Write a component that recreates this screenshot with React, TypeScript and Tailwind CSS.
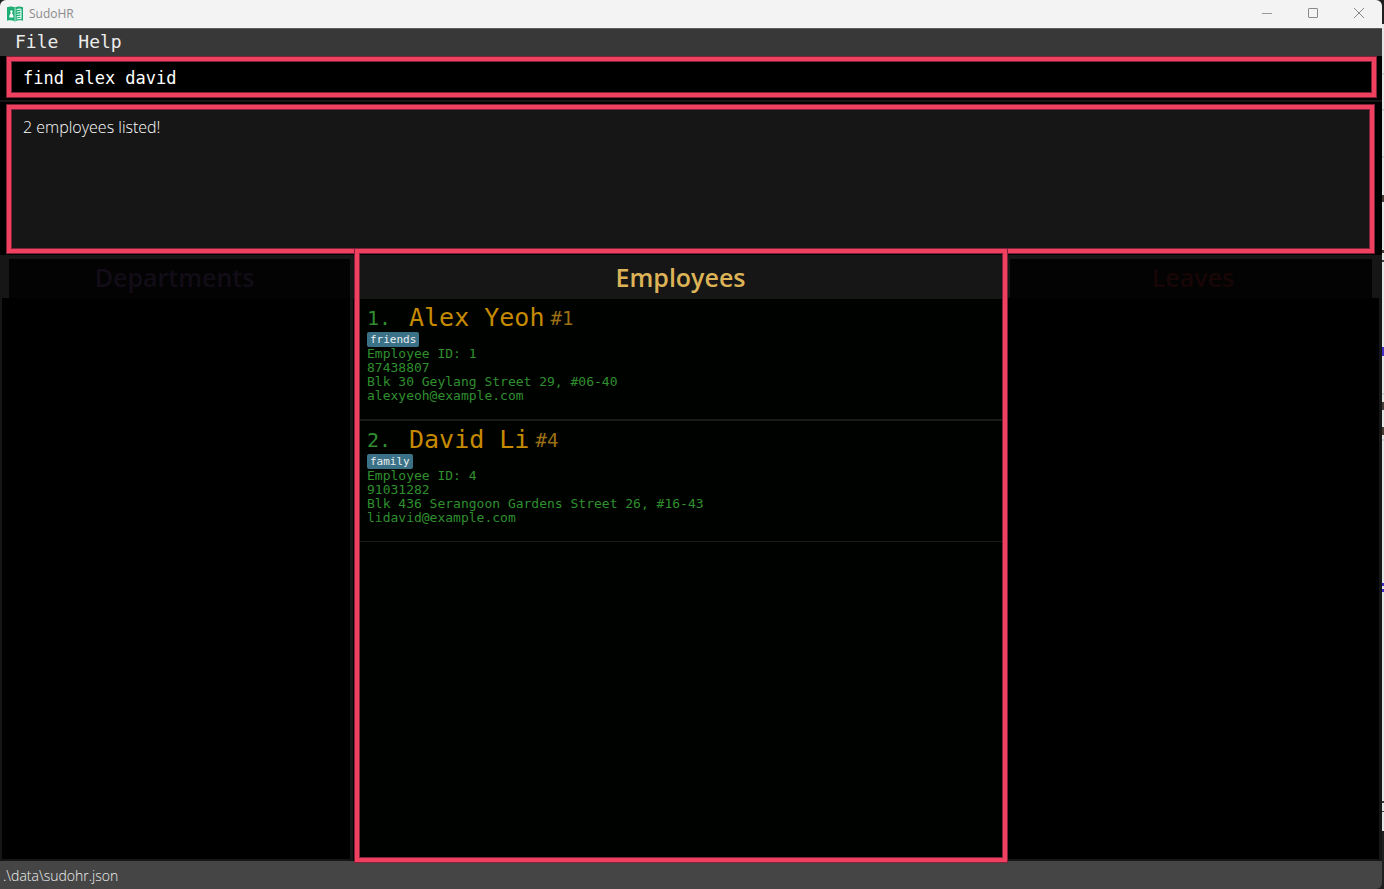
import React from "react";

const SANS = "font-['Open_Sans','Noto_Sans',sans-serif]";
const MONO = "font-['DejaVu_Sans_Mono',monospace]";
const FRAME =
  "border-4 border-[#ef4060] shadow-[0_0_0_1px_#80233a,inset_0_0_0_1px_#80233a]";

interface Employee {
  id: number;
  name: string;
  tag: string;
  phone: string;
  address: string;
  email: string;
}

const employees: Employee[] = [
  {
    id: 1,
    name: "Alex Yeoh",
    tag: "friends",
    phone: "87438807",
    address: "Blk 30 Geylang Street 29, #06-40",
    email: "alexyeoh@example.com",
  },
  {
    id: 4,
    name: "David Li",
    tag: "family",
    phone: "91031282",
    address: "Blk 436 Serangoon Gardens Street 26, #16-43",
    email: "lidavid@example.com",
  },
];

function AppIcon() {
  return (
    <svg className="size-4" viewBox="0 0 16 16" aria-hidden="true">
      <path
        d="M0 1.2C2.8.1 5.6.2 8 1.4 10.4.2 13.2.1 16 1.2v13.6c-2.8-.8-5.6-.6-8 .6-2.4-1.2-5.2-1.4-8-.6z"
        fill="#1cae74"
      />
      <path d="M8.1 2v13" stroke="#d5f2e5" strokeWidth="0.8" />
      <path
        d="M4.4 4.2a1.2 1.2 0 0 1 .9 2l-.3 1.3c.9.6 1.5 1.8 1.5 3.9H2.3c0-2.1.6-3.3 1.5-3.9l-.3-1.3a1.2 1.2 0 0 1 .9-2z"
        fill="#fff"
      />
      <path
        d="M9.6 3.8q2.2-1 4.4-.5M9.6 6.2q2.2-1 4.4-.5M9.6 8.6q2.2-1 4.4-.5M9.6 11q2.2-1 4.4-.5M9.6 13.1q2.2-1 4.4-.5M14 3.3v9.4"
        fill="none"
        stroke="#e6f8f0"
        strokeWidth="1.1"
      />
    </svg>
  );
}

function TitleBar() {
  const button = "flex h-full w-[46px] items-center justify-center";
  return (
    <header className="flex h-7 shrink-0 items-center rounded-t-md bg-[#f3f3f3] pl-[7px]">
      <AppIcon />
      <h1 className={`ml-[6px] text-xs text-[#8b8b8b] ${SANS}`}>SudoHR</h1>
      <div className="ml-auto flex h-full pb-[3px]">
        <button className={button} aria-label="Minimize">
          <svg className="size-3" viewBox="0 0 12 12" fill="none" stroke="#999">
            <path d="M1 6.5h10" />
          </svg>
        </button>
        <button className={button} aria-label="Maximize">
          <svg className="size-3" viewBox="0 0 12 12" fill="none" stroke="#8a8a8a">
            <rect x="1.5" y="1.5" width="9" height="9" rx="0.5" />
          </svg>
        </button>
        <button className={button} aria-label="Close">
          <svg className="size-3" viewBox="0 0 12 12" fill="none" stroke="#8a8a8a">
            <path d="M1 1l10 10M11 1L1 11" />
          </svg>
        </button>
      </div>
    </header>
  );
}

function EmployeeCard({ employee, index }: { employee: Employee; index: number }) {
  return (
    <li className="border-b-2 border-[#1b1b1b] pt-1 pb-4 pl-3 last:border-b">
      <div className="flex h-[29px] items-center">
        <span className="w-[42px] text-[20px] leading-7">{index}.</span>
        <h3 className="text-[25px] leading-[30px] text-[#c68a00]">{employee.name}</h3>
        <span className="ml-[6px] text-[19px] leading-7 text-[#9c7114]">#{employee.id}</span>
      </div>
      <span className="block h-[15px] w-fit rounded-xs bg-[#3b7187] px-[3px] text-[11px] leading-4 text-[#e8eef0]">
        {employee.tag}
      </span>
      <div className="text-[13px] leading-[14px]">
        <p>Employee ID: {employee.id}</p>
        <p>{employee.phone}</p>
        <p>{employee.address}</p>
        <p>{employee.email}</p>
      </div>
    </li>
  );
}

function DimmedPanel({
  title,
  tone,
  side,
  inset,
}: {
  title: string;
  tone: string;
  side: string;
  inset: string;
}) {
  return (
    <section className={`flex min-w-0 flex-col pb-[2px] ${side}`}>
      <div className={`pt-1 ${inset}`}>
        <h2
          className={`h-[39px] bg-[#030303] text-center text-[25px] leading-9 font-semibold ${SANS} ${tone}`}
        >
          {title}
        </h2>
      </div>
      <div className="flex-1 bg-black" />
    </section>
  );
}

function BackgroundEdge() {
  return (
    <svg className="h-full w-[2px]" viewBox="0 0 2 889" preserveAspectRatio="none" aria-hidden="true">
      <path d="M0 0h2v24H0zM0 831h2v58H0z" fill="#202020" />
      <path d="M0 24h2v807H0z" fill="#e6e6e6" />
      <path
        d="M0 74h2M0 110h2M0 157h2M0 394h2M0 440h2"
        stroke="#bbb"
        strokeWidth="1"
      />
      <path d="M0 195h2v7H0zM0 250h2v3H0zM0 260h2v2H0zM0 402h2v8H0zM0 427h2v8H0zM0 801h2v2H0zM0 811h2v1H0z" fill="#4a4039" />
      <path d="M0 347h2v9H0zM0 583h2v3H0zM0 589h2v3H0z" fill="#4a32c8" />
    </svg>
  );
}

export default function App() {
  return (
    <div className="grid h-screen grid-cols-[minmax(0,1fr)_2px] bg-[#202020]">
      <div className="flex min-h-0 flex-col">
        <TitleBar />

        <nav
          className={`flex h-7 shrink-0 items-center gap-5 border-t border-[#5c5c5c] bg-[#383838] pb-[2px] pl-[15px] text-lg text-[#ececec] ${MONO}`}
        >
          <button>File</button>
          <button>Help</button>
        </nav>

        <div className="shrink-0 border-b-2 border-[#161616] bg-black pt-px pr-[6px] pb-[3px] pl-[7px]">
          <input
            type="text"
            aria-label="Command"
            defaultValue="find alex david"
            className={`block h-10 w-full bg-black px-3 pt-[2px] text-[17px] text-white outline-none ${MONO} ${FRAME}`}
          />
        </div>

        <div className="shrink-0 bg-black pt-[3px] pr-2 pb-[2px] pl-[7px]">
          <div
            role="status"
            className={`h-[148px] bg-[#161616] px-3 pt-[6px] text-base leading-6 font-light text-white ${SANS} ${FRAME}`}
          >
            2 employees listed!
          </div>
        </div>

        <main className="grid min-h-0 flex-1 grid-cols-[353fr_655fr_374fr] bg-[#161616]">
          <DimmedPanel
            title="Departments"
            tone="pr-[10px] text-[#120c17]"
            side="pr-[3px] pl-[2px]"
            inset="pl-[7px]"
          />

          <section className="relative flex min-w-0 flex-col">
            <h2
              className={`h-11 text-center text-[25px] leading-11 font-semibold text-[#dcb457] ${SANS}`}
            >
              Employees
            </h2>
            <ol className={`flex-1 bg-[#000200] pr-[5px] pl-[2px] text-[#2f8f2f] ${MONO}`}>
              {employees.map((employee, i) => (
                <EmployeeCard key={employee.id} employee={employee} index={i + 1} />
              ))}
            </ol>
            <div
              className={`pointer-events-none absolute -top-[6px] right-px -bottom-px left-[2px] ${FRAME}`}
            />
          </section>

          <DimmedPanel
            title="Leaves"
            tone="pl-1 text-[#180607]"
            side="pr-[3px]"
            inset="pr-[7px] pl-[2px]"
          />
        </main>

        <footer
          className={`h-7 shrink-0 rounded-br-md bg-[#454545] pl-[3px] text-sm leading-[29px] font-light text-[#f0f0f0] ${SANS}`}
        >
          .\data\sudohr.json
        </footer>
      </div>
      <BackgroundEdge />
    </div>
  );
}
